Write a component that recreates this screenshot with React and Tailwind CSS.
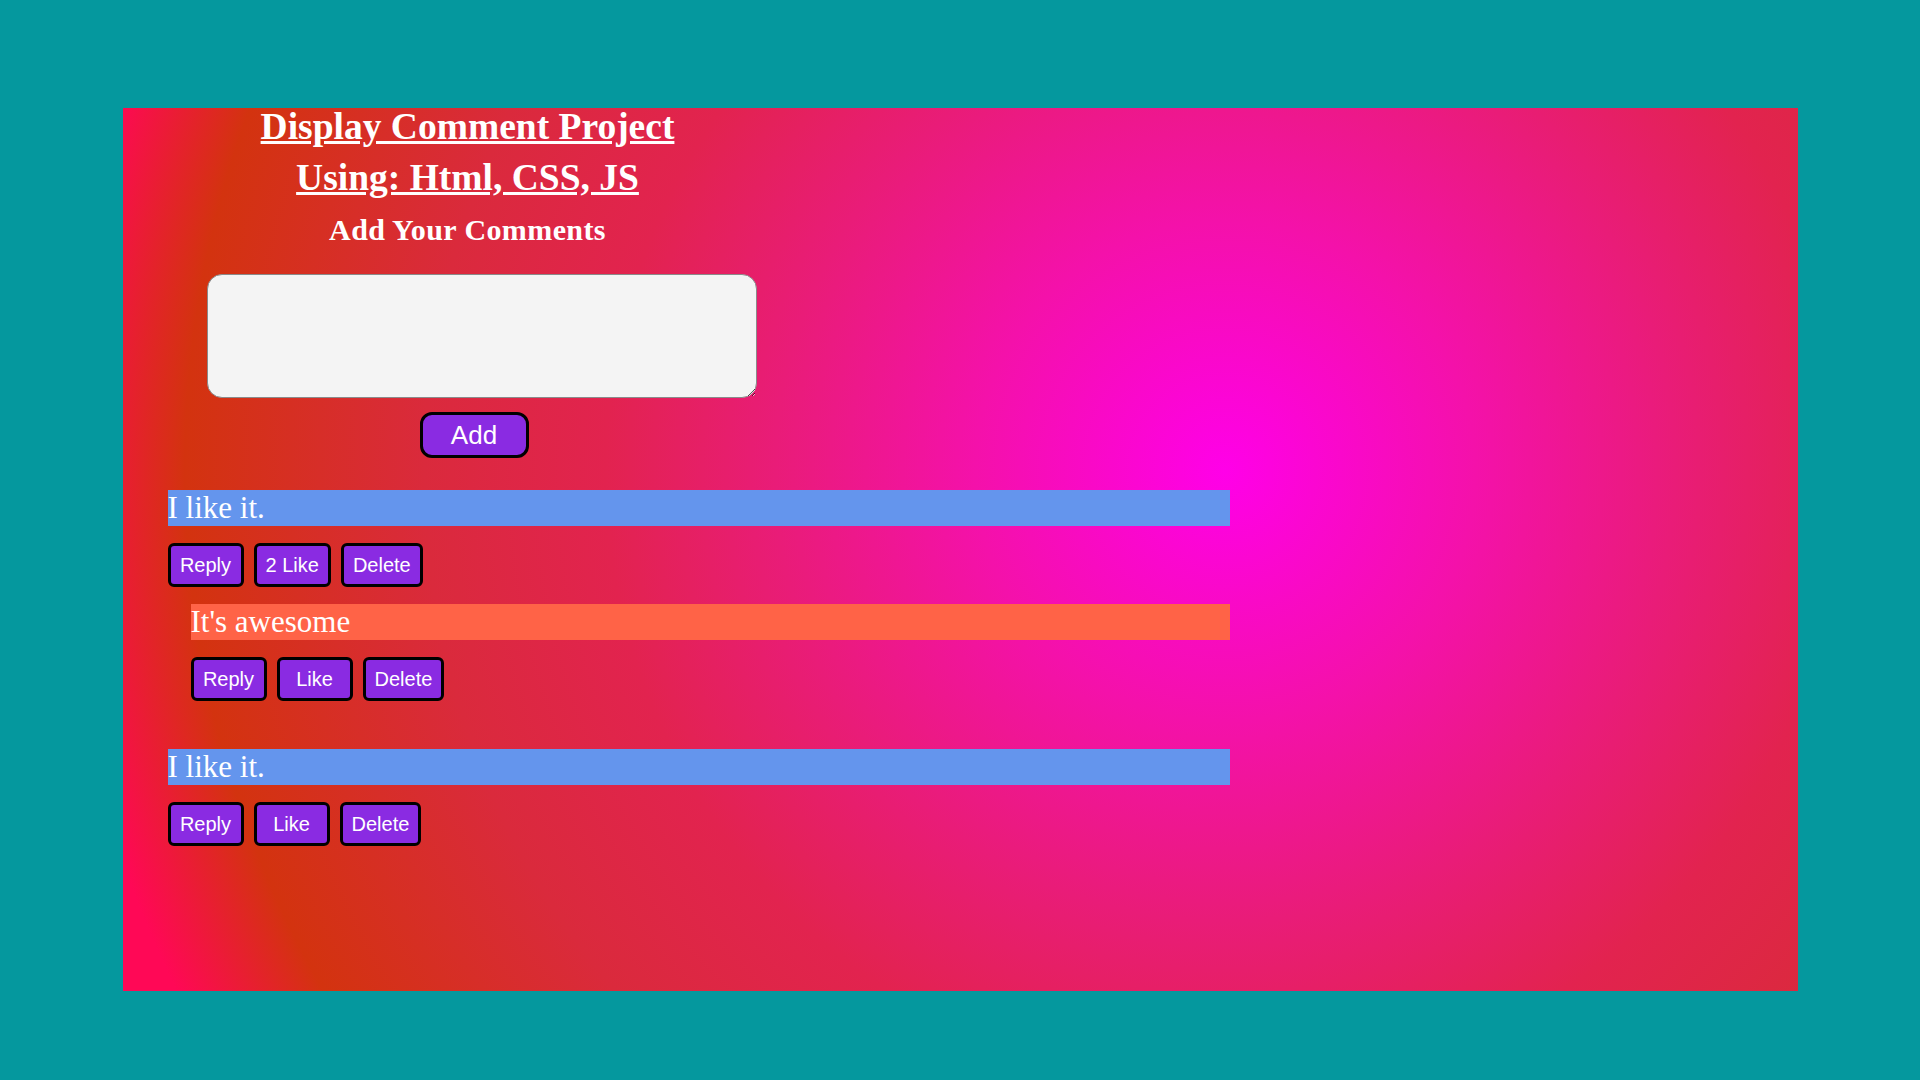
import { useState } from "react"

const initialComments = [
  {
    id: 1,
    text: "I like it.",
    likes: 2,
    replies: [{ id: 11, text: "It's awesome", likes: 0, replies: [] }],
  },
  { id: 2, text: "I like it.", likes: 0, replies: [] },
]

function ActionButton({ children, onClick }) {
  return (
    <button
      onClick={onClick}
      className="min-w-[76px] px-[9px] py-[7.5px] leading-[23px] text-[20px] text-white bg-[#8a2be2] border-[3px] border-black rounded-[6px] font-['Liberation_Sans',Arial,sans-serif]"
    >
      {children}
    </button>
  )
}

function Comment({ comment, isReply }) {
  const [likes, setLikes] = useState(comment.likes)
  return (
    <div>
      <div
        className={`h-[36px] leading-[36px] text-[31px] text-white ${
          isReply ? "bg-[#ff6347]" : "bg-[#6495ed]"
        }`}
      >
        {comment.text}
      </div>
      <div className="flex gap-[10px] mt-[17px]">
        <ActionButton>Reply</ActionButton>
        <ActionButton onClick={() => setLikes(likes + 1)}>
          {likes > 0 ? `${likes} Like` : "Like"}
        </ActionButton>
        <ActionButton>Delete</ActionButton>
      </div>
      {comment.replies.length > 0 && (
        <div className="ml-[23px] mt-[17px]">
          {comment.replies.map((r) => (
            <Comment key={r.id} comment={r} isReply />
          ))}
        </div>
      )}
    </div>
  )
}

export default function App() {
  const [text, setText] = useState("")
  const [comments] = useState(initialComments)

  return (
    <div className="min-h-screen bg-[#05989e] pt-[108px] pb-[89px]">
      <div className="mx-auto w-[1675px] h-[883px] text-white font-['Liberation_Serif','Times_New_Roman',serif] bg-[radial-gradient(circle_at_1102px_363px,#ff00e8_0px,#f411aa_250px,#e91c78_450px,#e2234f_620px,#da2a3c_800px,#d3330f_1040px,#ff0856_1170px)]">
        {/* Header */}
        <div className="w-[690px] text-center font-bold">
          <div className="text-[37.5px] leading-[37.5px] underline">Display Comment Project</div>
          <div className="text-[37.5px] leading-[37.5px] underline mt-[13.5px]">Using: Html, CSS, JS</div>
          <div className="text-[30px] leading-[30px] tracking-[0.4px] mt-[18.7px]">Add Your Comments</div>
        </div>

        <textarea
          value={text}
          onChange={(e) => setText(e.target.value)}
          className="block ml-[84px] mt-[29px] w-[550px] h-[124px] bg-[#f4f4f4] border border-[#8a8a8a] rounded-[15px] text-black p-2 outline-none"
        />

        <button className="block ml-[297px] mt-[14px] w-[109px] h-[46px] text-[26px] leading-[30px] text-white bg-[#8a2be2] border-[3px] border-black rounded-[12px] font-['Liberation_Sans',Arial,sans-serif]">
          Add
        </button>

        {/* Comments */}
        <div className="ml-[45px] mt-[32px] w-[1062px] flex flex-col gap-[48px]">
          {comments.map((c) => (
            <Comment key={c.id} comment={c} />
          ))}
        </div>
      </div>
    </div>
  )
}
